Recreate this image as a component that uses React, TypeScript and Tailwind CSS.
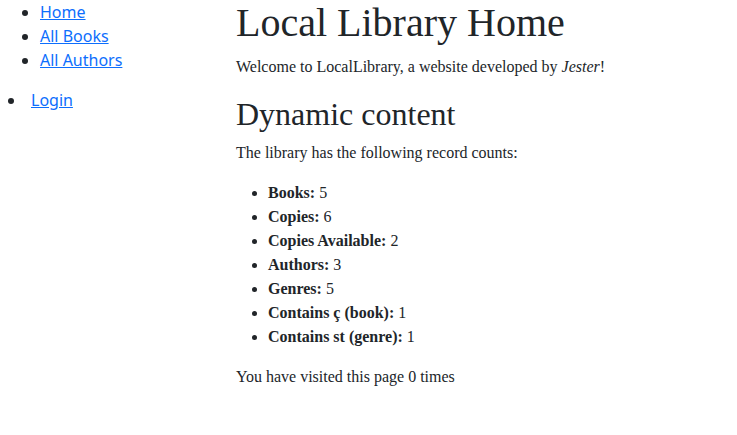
export default function App() {
  const counts = [
    { label: "Books:", value: 5 },
    { label: "Copies:", value: 6 },
    { label: "Copies Available:", value: 2 },
    { label: "Authors:", value: 3 },
    { label: "Genres:", value: 5 },
    { label: "Contains ç (book):", value: 1 },
    { label: "Contains st (genre):", value: 1 },
  ];

  return (
    <div className="flex min-h-[435px] bg-white text-[#212529] text-base leading-6">
      <div className="w-[236px] shrink-0 font-['Noto_Sans',sans-serif]">
        <ul className="list-disc pl-[40px] mb-4">
          <li><a href="#" className="text-[#0d6efd] underline">Home</a></li>
          <li><a href="#" className="text-[#0d6efd] underline">All Books</a></li>
          <li><a href="#" className="text-[#0d6efd] underline">All Authors</a></li>
        </ul>
        <ul className="list-disc pl-[26px]">
          <li><a href="#" className="ml-[5px] text-[#0d6efd] underline">Login</a></li>
        </ul>
      </div>

      <div className="flex-1 font-['Liberation_Serif',serif]">
        <h1 className="text-[40px] leading-[1.2] mb-2 -mt-[1px]">Local Library Home</h1>
        <p className="mb-4">
          Welcome to LocalLibrary, a website developed by <em>Jester</em>!
        </p>

        <h2 className="text-[32px] leading-[1.2] mb-2">Dynamic content</h2>
        <p className="mb-4">The library has the following record counts:</p>

        <ul className="list-disc pl-8 mb-4">
          {counts.map((c) => (
            <li key={c.label}>
              <strong className="font-bold">{c.label}</strong> {c.value}
            </li>
          ))}
        </ul>

        <p>You have visited this page 0 times</p>
      </div>
    </div>
  );
}
